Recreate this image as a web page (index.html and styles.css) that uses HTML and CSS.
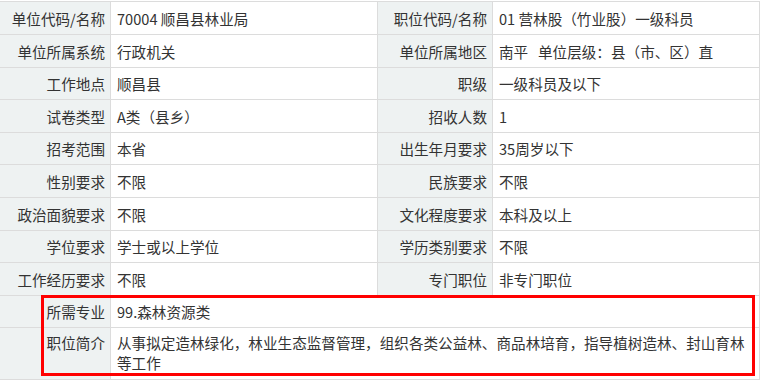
FILE: index.html
```html
<!DOCTYPE html>
<html lang="zh-CN">
<head>
<meta charset="utf-8">
<title>职位信息</title>
<link rel="stylesheet" href="styles.css">
</head>
<body>
<div class="sheet">
  <div class="grid">
    <div class="lab">单位代码/名称</div><div class="val">70004 顺昌县林业局</div>
    <div class="lab">职位代码/名称</div><div class="val">01 营林股（竹业股）一级科员</div>

    <div class="lab">单位所属系统</div><div class="val">行政机关</div>
    <div class="lab">单位所属地区</div><div class="val">南平&nbsp;&nbsp;&nbsp;单位层级：县（市、区）直</div>

    <div class="lab">工作地点</div><div class="val">顺昌县</div>
    <div class="lab">职级</div><div class="val">一级科员及以下</div>

    <div class="lab">试卷类型</div><div class="val">A类（县乡）</div>
    <div class="lab">招收人数</div><div class="val">1</div>

    <div class="lab">招考范围</div><div class="val">本省</div>
    <div class="lab">出生年月要求</div><div class="val">35周岁以下</div>

    <div class="lab">性别要求</div><div class="val">不限</div>
    <div class="lab">民族要求</div><div class="val">不限</div>

    <div class="lab">政治面貌要求</div><div class="val">不限</div>
    <div class="lab">文化程度要求</div><div class="val">本科及以上</div>

    <div class="lab">学位要求</div><div class="val">学士或以上学位</div>
    <div class="lab">学历类别要求</div><div class="val">不限</div>

    <div class="lab">工作经历要求</div><div class="val">不限</div>
    <div class="lab">专门职位</div><div class="val">非专门职位</div>

    <div class="lab">所需专业</div><div class="val wide">99.森林资源类</div>

    <div class="lab top">职位简介</div><div class="val wide top">从事拟定造林绿化，林业生态监督管理，组织各类公益林、商品林培育，指导植树造林、封山育林等工作</div>
  </div>
  <div class="mark"></div>
</div>
</body>
</html>
```
FILE: styles.css
```css
html, body {
  margin: 0;
  padding: 0;
  background: #fff;
}

body {
  font-family: "Microsoft YaHei", "Noto Sans CJK SC", "Noto Sans", sans-serif;
  font-size: 14.6px;
  color: #333;
}

.sheet {
  position: relative;
  width: 760px;
  padding-top: 1px;
}

.grid {
  display: grid;
  grid-template-columns: 110px 266px 114px 266px;
  grid-template-rows: 32px 32px 31px 32px 31px 32px 32px 31px 32px 31px auto;
  gap: 1px;
  background: #dcdcdc;
  padding: 1px 1px 1px 0;
}

.lab {
  display: flex;
  align-items: center;
  justify-content: flex-end;
  padding-right: 5px;
  background: #eef2f2;
  white-space: nowrap;
}

.val {
  display: flex;
  align-items: center;
  padding-left: 6px;
  background: #fff;
  white-space: nowrap;
}

.wide {
  grid-column: 2 / 5;
  white-space: normal;
  padding-right: 6px;
}

.top {
  align-items: flex-start;
  padding-top: 5px;
  padding-bottom: 6px;
  line-height: 20px;
}

.mark {
  position: absolute;
  left: 41px;
  top: 295px;
  width: 708px;
  height: 75px;
  border: 3px solid #ff0000;
  pointer-events: none;
}
```
